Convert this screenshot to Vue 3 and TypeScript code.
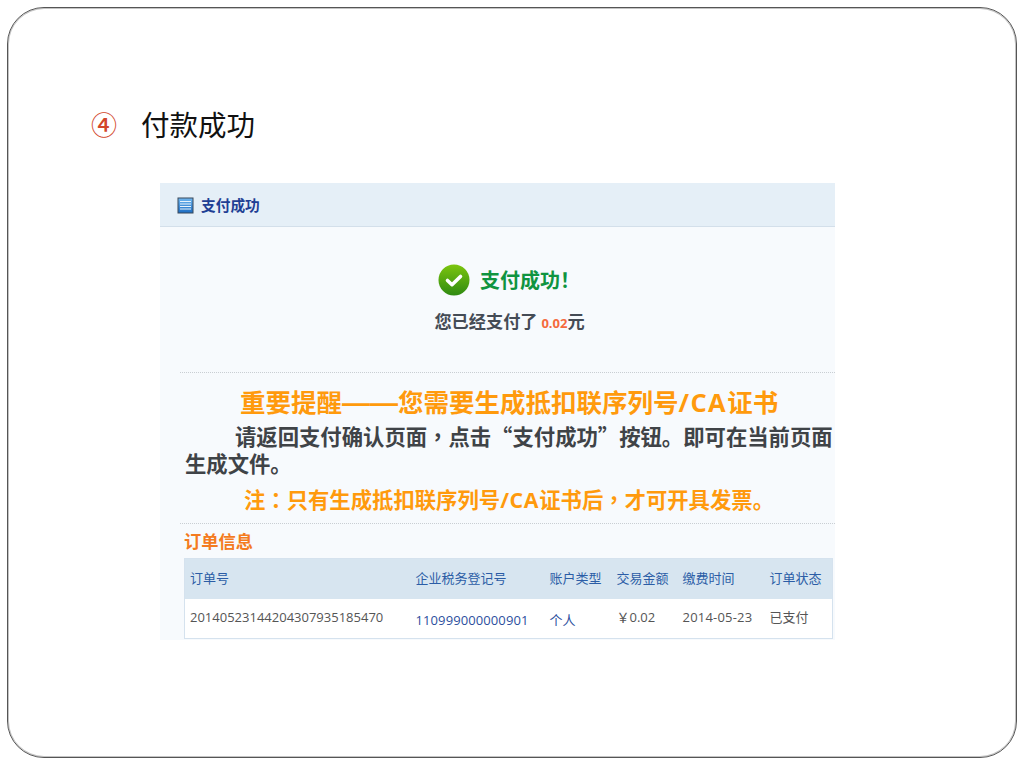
<script setup lang="ts">
const columns = ['订单号', '企业税务登记号', '账户类型', '交易金额', '缴费时间', '订单状态']
</script>

<template>
  <div class="slide">
    <div class="title-row">
      <span class="bullet">④</span>
      <h1>付款成功</h1>
    </div>

    <div class="panel">
      <div class="panel-head">
        <svg class="list-icon" width="17" height="17" viewBox="0 0 17 17">
          <defs>
            <linearGradient id="listBg" x1="0" y1="0" x2="0" y2="1">
              <stop offset="0" stop-color="#6db4ee" />
              <stop offset="1" stop-color="#1f6fc4" />
            </linearGradient>
          </defs>
          <rect x="0.5" y="0.5" width="16" height="16" fill="#39485a" />
          <rect x="1.5" y="1.5" width="14" height="14" fill="url(#listBg)" />
          <path d="M3 4.5h11M3 7h11M3 9.5h11M3 12h11" stroke="#e8f3fc" stroke-width="1.2" />
        </svg>
        <span class="panel-title">支付成功</span>
      </div>

      <div class="result">
        <div class="result-line">
          <svg width="32" height="32" viewBox="0 0 32 32">
            <defs>
              <linearGradient id="okBg" x1="0" y1="0" x2="0" y2="1">
                <stop offset="0" stop-color="#7cc50e" />
                <stop offset="1" stop-color="#2f8a12" />
              </linearGradient>
            </defs>
            <circle cx="16" cy="16" r="15.5" fill="url(#okBg)" />
            <path d="M9.5 16.5l4.5 4.2 8.5-8.2" fill="none" stroke="#fff" stroke-width="3.6" stroke-linecap="round" stroke-linejoin="round" />
          </svg>
          <span class="result-text">支付成功！</span>
        </div>
        <p class="paid">您已经支付了 <span class="amount">0.02</span>元</p>
      </div>

      <div class="notice">
        <p class="notice-title">重要提醒<span class="dash">——</span>您需要生成抵扣联序列号<span class="latin wide">/CA</span>证书</p>
        <p class="notice-body">请返回支付确认页面<span class="tc">，</span>点击“支付成功”按钮。即可在当前页面<span>生成文件。</span></p>
        <p class="notice-foot">注<span class="tc">：</span>只有生成抵扣联序列号<span class="latin">/CA</span>证书后<span class="tc">，</span>才可开具发票。</p>
      </div>

      <div class="orders">
        <h2>订单信息</h2>
        <table>
          <colgroup>
            <col class="c1" /><col class="c2" /><col class="c3" /><col class="c4" /><col class="c5" /><col class="c6" />
          </colgroup>
          <thead>
            <tr>
              <th v-for="col in columns" :key="col">{{ col }}</th>
            </tr>
          </thead>
          <tbody>
            <tr>
              <td>20140523144204307935185470</td>
              <td class="link low">110999000000901</td>
              <td class="link low">个人</td>
              <td>￥0.02</td>
              <td class="date">2014-05-23</td>
              <td>已支付</td>
            </tr>
          </tbody>
        </table>
      </div>
    </div>
  </div>
</template>

<style>
html, body {
  margin: 0;
  background: #fff;
}
</style>

<style scoped>
* {
  box-sizing: border-box;
}

.slide {
  width: 1010px;
  height: 751px;
  margin: 7px 0 0 7px;
  padding: 91px 0 0 83px;
  background: #fff;
  border: 1px solid #555;
  border-radius: 37px;
  box-shadow: inset 0 0 0 1px #c4c4c4;
  font-family: "Noto Sans CJK SC", sans-serif;
}

.title-row {
  display: flex;
  align-items: center;
  height: 48px;
}

.bullet {
  width: 50px;
  font-size: 26px;
  font-weight: 500;
  color: #d2462a;
}

h1 {
  margin: 0;
  font-size: 28.5px;
  font-weight: 400;
  color: #111;
}

.panel {
  width: 675px;
  height: 457px;
  margin: 36px 0 0 69px;
  background: #f7fafd;
  overflow: hidden;
}

.panel-head {
  display: flex;
  align-items: center;
  gap: 7px;
  height: 44px;
  padding-left: 17px;
  background: #e5eff7;
  border-bottom: 1px solid #d3dfea;
}

.list-icon {
  margin-top: 1px;
}

.panel-title {
  font-size: 14.7px;
  font-weight: 700;
  line-height: 42px;
  color: #1f3f94;
}

.result {
  height: 146px;
  margin-left: 20px;
  padding-top: 37px;
  border-bottom: 1px dotted #c9ced3;
  text-align: center;
}

.result-line {
  display: flex;
  align-items: center;
  justify-content: center;
  gap: 10px;
  height: 32px;
  margin-left: 3px;
}

.result-text {
  font-size: 20px;
  font-weight: 700;
  line-height: 28px;
  margin-bottom: 1px;
  color: #0f9440;
}

.paid {
  margin: 11px 0 0 4px;
  font-size: 17.2px;
  font-weight: 700;
  line-height: 28px;
  color: #444b55;
}

.amount {
  font-family: "Open Sans", sans-serif;
  font-size: 13px;
  color: #f5693c;
}

.notice {
  height: 151px;
  margin-left: 20px;
  border-bottom: 1px dotted #c9ced3;
}

.notice p {
  margin: 0;
  font-weight: 700;
}

.notice-title {
  padding: 10px 0 0 60px;
  font-size: 25.5px;
  line-height: 36px;
  color: #ff9a0d;
}

.dash {
  font-family: "Liberation Sans", sans-serif;
  font-size: 28px;
  line-height: 1;
}

.latin {
  font-family: "Open Sans", sans-serif;
  letter-spacing: 0.03em;
}

.latin.wide {
  letter-spacing: 0.055em;
}

.tc {
  font-family: "Noto Sans CJK TC", sans-serif;
}

.notice-body {
  margin-top: 2px !important;
  padding-left: 5px;
  font-size: 21.35px;
  line-height: 27px;
  text-indent: 50px;
  color: #3f4347;
}

.notice-foot {
  padding: 8px 0 0 64px;
  font-size: 21.35px;
  line-height: 30px;
  color: #ff9a0d;
}

.orders {
  margin-left: 24px;
}

h2 {
  margin: 0;
  height: 34px;
  font-size: 17.25px;
  font-weight: 700;
  line-height: 34px;
  color: #f47b20;
}

table {
  width: 648px;
  border-collapse: collapse;
  table-layout: fixed;
  background: #fff;
  border: 1px solid #d5e2ee;
  font-family: "Open Sans", "Noto Sans CJK SC", sans-serif;
  font-size: 13px;
}

.c1 { width: 226px; }
.c2 { width: 134px; }
.c3 { width: 67px; }
.c4 { width: 66px; }
.c5 { width: 87px; }
.c6 { width: 68px; }

th {
  height: 40px;
  padding: 0 0 3px 5px;
  background: #d7e5f0;
  font-weight: 400;
  text-align: left;
  color: #2b5da6;
  white-space: nowrap;
}

td {
  height: 40px;
  padding: 0 0 3px 5px;
  color: #555;
  white-space: nowrap;
}

td.date {
  letter-spacing: 0.2px;
}

td.link {
  color: #2c4f9e;
  letter-spacing: 0.1px;
}

td.low {
  padding: 3px 0 0 5px;
}
</style>
